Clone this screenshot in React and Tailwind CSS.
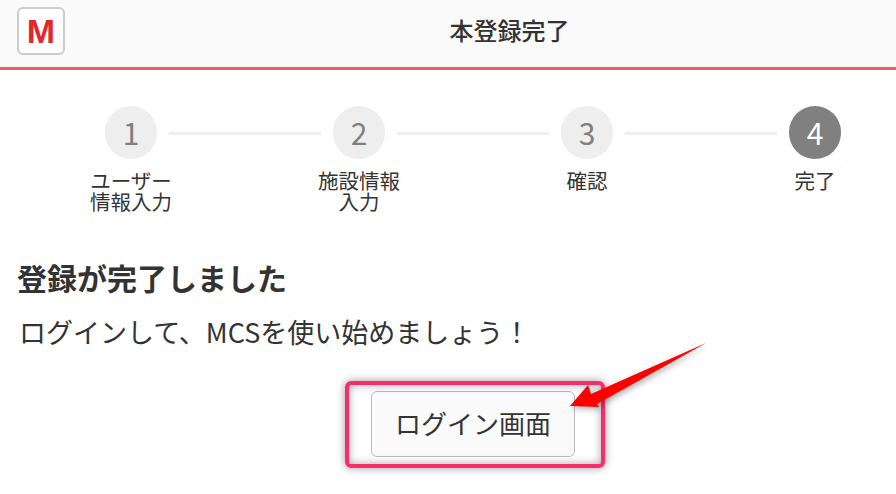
const steps = [
  { no: 1, label: ['ユーザー', '情報入力'] },
  { no: 2, label: ['施設情報', '入力'] },
  { no: 3, label: ['確認'] },
  { no: 4, label: ['完了'], active: true },
];

function Step({ no, label, active }) {
  return (
    <div className="flex w-[52px] shrink-0 flex-col items-center">
      <div className={`flex h-[53px] w-[52px] items-center justify-center rounded-full text-[30px] ${active ? 'bg-[#808080] text-white' : 'bg-[#eeeeee] text-[#808080]'}`}>
        {no}
      </div>
      <div className="mt-[11px] w-[90px] shrink-0 text-center text-[20.5px] leading-[21px] text-[#333333]">
        {label.map((line) => (
          <div key={line}>{line}</div>
        ))}
      </div>
    </div>
  );
}

export default function App() {
  return (
    <div className="relative h-[494px] w-[896px] overflow-hidden bg-white font-['Noto_Sans_CJK_JP',sans-serif]">
      <header className="flex h-[70px] items-start border-b-[3px] border-[#f55a64] bg-[#fafafa] pl-[17px] pt-[7px]">
        <div className="flex h-[48px] w-[48px] shrink-0 items-center justify-center rounded-[6px] border-2 border-[#cccccc] bg-white font-['Liberation_Sans',sans-serif] text-[34px] font-bold text-[#e0282d]">
          M
        </div>
        <h1 className="flex-1 pl-[58px] text-center text-[24px] font-medium leading-[46px] text-[#333333]">本登録完了</h1>
      </header>

      <div className="flex items-start pl-[105px] pt-[36px]">
        {steps.map((step, i) => (
          <div key={step.no} className="flex items-start">
            <Step {...step} />
            {i < steps.length - 1 && <div className="mx-3 mt-[26px] h-[3px] w-[152px] bg-[#eeeeee]" />}
          </div>
        ))}
      </div>

      <main className="px-[18px]">
        <h2 className="-ml-px mt-[47px] text-[30px] font-bold leading-[36px] text-[#333333]">登録が完了しました</h2>
        <p className="ml-px mt-[19px] text-[27px] leading-[36px] text-[#333333]">ログインして、MCSを使い始めましょう！</p>
        <div className="mt-[41px] flex justify-center pl-[50px]">
          <button className="h-[66px] w-[204px] rounded-[6px] border border-[#bbbbbb] bg-[#fafafa] pb-1 text-[26px] text-[#333333]">
            ログイン画面
          </button>
        </div>
      </main>

      {/* annotation drawn on top of the screenshot */}
      <div className="absolute left-[345px] top-[381px] h-[87px] w-[260px] rounded-[6px] border-[4px] border-[#fb2c6b] shadow-[0_0_8px_rgba(0,0,0,0.4),inset_0_0_8px_rgba(0,0,0,0.35)]" />
      <svg className="absolute left-0 top-0" width="896" height="494" style={{ filter: 'drop-shadow(2px 2px 3px rgba(0,0,0,0.35))' }}>
        <path d="M570 406 L588 385 L591 394 L706 343 L597 404 L599 407 Z" fill="#ff0000" />
      </svg>
    </div>
  );
}
